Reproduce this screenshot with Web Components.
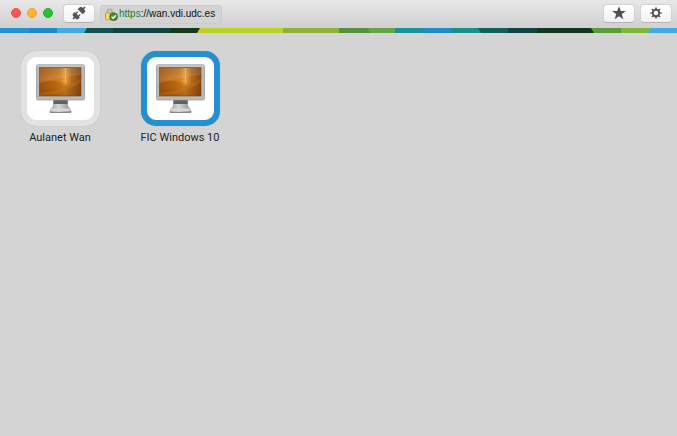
<!DOCTYPE html>
<html lang="en">
<head>
<meta charset="utf-8">
<title>wan.vdi.udc.es</title>
<style>
html, body { height: 100%; }
body { margin: 0; background: #d4d4d4; color: #1c1c1c; font: 11px/16px Roboto, "Liberation Sans", sans-serif; }
</style>
</head>
<body>
<vdi-window>
  <vdi-toolbar slot="bar">
    <traffic-lights></traffic-lights>
    <tool-button label="Disconnect">
      <svg width="14" height="14" viewBox="0 0 14 14" fill="#555"><g transform="rotate(-45 7 7)"><path d="M-1.500 6.200H.6V5Q.6 3.400 2.200 3.400H4.700V10.600H2.200Q.6 10.600 .6 9V7.800H-1.500z"/><path d="M4.500 4.600h2.400v1.200H4.500zM4.500 8.200h2.400v1.200H4.500z"/><path d="M8.700 3.400h2.900q1.600 0 1.600 1.600v1.200H15.500v1.600h-2.300V9q0 1.600-1.600 1.600H8.700z"/></g></svg>
    </tool-button>
    <address-field scheme="https" rest="://wan.vdi.udc.es"></address-field>
    <tool-button slot="end" label="Favorites">
      <svg width="14" height="14" viewBox="0 0 14 14" fill="#505050"><path d="M7 .2 8.800 5H13.900L9.800 8.100 11.300 13.200 7 10.200 2.700 13.200 4.200 8.100 .1 5H5.200z"/></svg>
    </tool-button>
    <tool-button slot="end" label="Settings">
      <svg width="14" height="14" viewBox="0 0 14 14" fill="none" stroke="#555"><circle cx="7" cy="7" r="3.200" stroke-width="1.900"/><path stroke-width="1.700" d="M7 3.300V1.400M7 10.700v1.900M3.300 7H1.400M10.700 7h1.900M4.400 4.400 3 3M9.600 9.600 11 11M9.600 4.400 11 3M4.400 9.600 3 11"/></svg>
    </tool-button>
  </vdi-toolbar>
  <color-ribbon slot="bar"></color-ribbon>
  <desktop-tile name="Aulanet Wan"></desktop-tile>
  <desktop-tile name="FIC Windows 10" selected></desktop-tile>
</vdi-window>
<script>
function define(name, html, setup) {
  const template = document.createElement('template');
  template.innerHTML = html;
  customElements.define(name, class extends HTMLElement {
    constructor() {
      super();
      this.attachShadow({ mode: 'open' }).append(template.content.cloneNode(true));
    }
    connectedCallback() { if (setup) setup(this, this.shadowRoot); }
  });
}

define('vdi-window', `
<style>
:host { display: flex; flex-direction: column; min-height: 100%; }
main { display: grid; grid-template-columns: repeat(auto-fill, 120px); row-gap: 16px; padding-top: 18px; }
</style>
<header><slot name="bar"></slot></header>
<main><slot></slot></main>`);

define('vdi-toolbar', `
<style>
:host { display: flex; align-items: center; box-sizing: border-box; height: 28px; padding: 0 5px 2px 11px; background: linear-gradient(#e8e8e8, #d0d0d0); }
.end { display: flex; gap: 5px; margin-left: auto; }
</style>
<slot></slot><div class="end"><slot name="end"></slot></div>`);

define('traffic-lights', `
<style>
:host { display: flex; gap: 6px; margin-right: 10px; }
button { width: 10px; height: 10px; padding: 0; border: 1px solid; border-radius: 50%; }
.close { background: #fc5652; border-color: #e8504b; }
.min { background: #fdb62d; border-color: #e6a32c; }
.zoom { background: #27c138; border-color: #22ad33; }
</style>
<button class="close" aria-label="Close"></button><button class="min" aria-label="Minimize"></button><button class="zoom" aria-label="Zoom"></button>`);

define('tool-button', `
<style>
:host { display: block; }
button { display: flex; align-items: center; justify-content: center; width: 32px; height: 19px; padding: 0; border: 1px solid #d2d2d2; border-bottom-color: #b4b4b4; border-radius: 4px; background: linear-gradient(#fff, #f1f1f1); }
::slotted(svg) { display: block; overflow: visible; }
</style>
<button><slot></slot></button>`, (el, root) => {
  root.querySelector('button').setAttribute('aria-label', el.getAttribute('label'));
});

define('address-field', `
<style>
:host { display: block; margin: 2px 0 0 5px; }
div { display: flex; align-items: center; box-sizing: border-box; width: 122px; height: 19px; padding-left: 4px; gap: 1px; border: 1px solid #cbcbcb; border-radius: 3px; background: #d3d3d3; }
a { font: 10px/14px "Liberation Sans", Arial, sans-serif; color: #111; text-decoration: none; white-space: nowrap; }
b { font-weight: normal; color: #16802a; }
svg { flex: none; }
</style>
<div>
<svg width="13" height="13" viewBox="0 0 13 13"><path d="M2.300 6V3.500Q2.300 1.200 4.700 1.200T7.100 3.500V6" fill="none" stroke="#aaa" stroke-width="1.400"/><rect x=".5" y="4.800" width="8.500" height="7" rx="1" fill="#efc142" stroke="#ba9137" stroke-width=".7"/><path d="M2.500 5.300v6" stroke="#ffe69a" stroke-width="1.400"/><circle cx="8.700" cy="8.700" r="3.900" fill="#438b2c" stroke="#31682b" stroke-width=".7"/><path d="m6.600 8.700 1.600 1.600 2.700-3" fill="none" stroke="#fff" stroke-width="1.300"/></svg>
<a href="#"><b></b><span></span></a>
</div>`, (el, root) => {
  root.querySelector('b').textContent = el.getAttribute('scheme');
  root.querySelector('span').textContent = el.getAttribute('rest');
});

define('color-ribbon', `
<style>
:host { display: block; height: 5px; }
svg { display: block; width: 100%; height: 5px; }
</style>
<svg viewBox="0 0 677 5" preserveAspectRatio="none" aria-hidden="true"></svg>`, (el, root) => {
  // [start, slant, colour]: each band runs on under the ones that follow it
  const bands = [[0,0,'#2294d5'],[28,3,'#1d8acb'],[57,0,'#42aae7'],[84,3,'#10524d'],[113,0,'#0d4441'],[169,3,'#13391f'],
    [197,3,'#bdd125'],[283,0,'#8eb337'],[339,0,'#55933b'],[370,-3,'#67a445'],[395,0,'#15949c'],[423,0,'#1f8bc9'],
    [452,0,'#16908e'],[481,-3,'#10605a'],[508,0,'#0e4542'],[537,0,'#12371f'],[594,-3,'#5a9b3a'],[621,0,'#7db836'],[648,3,'#42aae7']];
  root.querySelector('svg').innerHTML = bands.map(([x, s, c]) =>
    `<path fill="${c}" d="M${x + s} 0H677V5H${x}z"/>`).join('');
});

define('desktop-tile', `
<style>
:host { display: block; }
button { display: flex; flex-direction: column; align-items: center; gap: 4px; width: 100%; padding: 0; border: 0; background: none; color: inherit; font: inherit; }
.frame { display: flex; align-items: center; justify-content: center; box-sizing: border-box; width: 79px; height: 75px; border: 6px solid #e2e2e2; border-radius: 15px; background: #fff; box-shadow: 0 0 1px #aaa; }
:host([selected]) .frame { border-color: #2590cf; }
</style>
<button><span class="frame">
<svg width="50" height="50" viewBox="0 0 50 50">
<defs>
<linearGradient id="screen"><stop stop-color="#a9570e"/><stop offset=".35" stop-color="#c87214"/><stop offset=".6" stop-color="#dc8a26"/><stop offset="1" stop-color="#85460f"/></linearGradient>
<linearGradient id="shade" x2="0" y2="1"><stop stop-color="#61300a" stop-opacity=".3"/><stop offset=".4" stop-color="#61300a" stop-opacity="0"/><stop offset="1" stop-color="#61300a" stop-opacity=".25"/></linearGradient>
<linearGradient id="glow"><stop stop-color="#ffb633" stop-opacity="0"/><stop offset=".5" stop-color="#ffc85c" stop-opacity=".4"/><stop offset="1" stop-color="#ffb633" stop-opacity="0"/></linearGradient>
<linearGradient id="metal"><stop stop-color="#999"/><stop offset=".4" stop-color="#d6d6d6"/><stop offset="1" stop-color="#8b8b8b"/></linearGradient>
</defs>
<path d="M18 36H33V41Q33 43 36 46Q37.500 49 34 49H17Q13.500 49 15 46Q18 43 18 41z" fill="url(#metal)"/>
<path d="M18.500 36h14v4h-14z" fill="#606060"/>
<path d="M17 44.500H34L36 47H15z" fill="#d8d8d8"/>
<path d="M15 48.500H36" stroke="#888"/>
<rect x="1.500" y=".8" width="48" height="35.200" rx="1.500" fill="#b9bbbb" stroke="#999" stroke-width=".8"/>
<path d="M2 2H49" stroke="#d4d4d4"/>
<rect x="4.500" y="3.500" width="41.500" height="28.500" fill="url(#screen)"/>
<rect x="4.500" y="3.500" width="41.500" height="28.500" fill="url(#shade)" stroke="#76410f" stroke-width=".6"/>
<path d="M25 4h11v18H25z" fill="url(#glow)"/>
<path d="M4.500 17Q25 15 46 26V32H4.500z" fill="#8b420a" opacity=".2"/>
<path d="M4.500 29Q30 27 46 14V18Q30 30 4.500 32z" fill="#f19a23" opacity=".15"/>
<path d="M30.500 4V18" stroke="#ffe0a0" opacity=".3"/>
<path d="M4.500 3.500H46V11Q27 13 4.500 19z" fill="#fff" opacity=".12"/>
</svg></span><span class="name"></span></button>`, (el, root) => {
  root.querySelector('.name').textContent = el.getAttribute('name');
});
</script>
</body>
</html>
